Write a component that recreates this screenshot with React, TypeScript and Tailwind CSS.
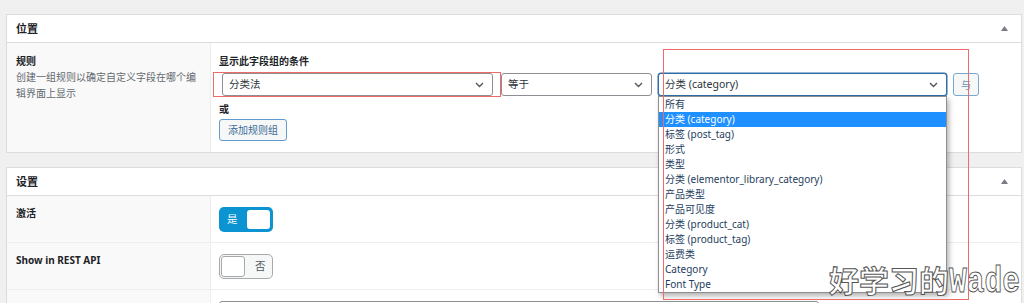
import type { ReactNode } from 'react';

const TAXONOMY_OPTIONS = [
  '所有',
  '分类 (category)',
  '标签 (post_tag)',
  '形式',
  '类型',
  '分类 (elementor_library_category)',
  '产品类型',
  '产品可见度',
  '分类 (product_cat)',
  '标签 (product_tag)',
  '运费类',
  'Category',
  'Font Type',
];

function Caret() {
  return (
    <svg width="7" height="5" viewBox="0 0 7 5" className="mr-[4px]">
      <path d="M0 5 L3.5 0 L7 5 Z" fill="#787c82" />
    </svg>
  );
}

function Chevron() {
  return (
    <svg width="9" height="6" viewBox="0 0 9 6" className="shrink-0">
      <path d="M1 1 L4.5 4.5 L8 1" fill="none" stroke="#50575e" strokeWidth="1.4" />
    </svg>
  );
}

function Panel({ title, children }: { title: string; children: ReactNode }) {
  return (
    <section className="border border-[#dcdcde] bg-white">
      <div className="flex h-[28px] items-center justify-between border-b border-[#dcdcde] px-[9px]">
        <h2 className="text-[11px] font-bold leading-none text-[#1d2327]">{title}</h2>
        <Caret />
      </div>
      {children}
    </section>
  );
}

function SelectBox({ label, width, focused }: { label: string; width: string; focused?: boolean }) {
  return (
    <div
      className={`flex h-[23px] items-center justify-between rounded-[3px] border bg-white pl-[6px] pr-[8px] text-[10.5px] text-[#2c3338] ${width} ${
        focused ? 'border-[#2f6ea8] shadow-[0_0_0_0.5px_#2f6ea8]' : 'border-[#8c8f94]'
      }`}
    >
      <span className="leading-none">{label}</span>
      <Chevron />
    </div>
  );
}

function Toggle({ on }: { on: boolean }) {
  if (on) {
    return (
      <div className="flex h-[25px] w-[54px] items-center justify-between rounded-[5px] bg-[#0c93d2] pl-[8px] pr-[3px]">
        <span className="text-[10.5px] leading-none text-white">是</span>
        <span className="h-[19px] w-[23px] rounded-[3px] bg-white" />
      </div>
    );
  }
  return (
    <div className="flex h-[25px] w-[54px] items-center rounded-[5px] border border-[#a7aaad] bg-[#f6f7f7] pl-[1px]">
      <span className="h-[21px] w-[24px] rounded-[3px] border border-[#a7aaad] bg-white" />
      <span className="ml-[10px] text-[10.5px] leading-none text-[#50575e]">否</span>
    </div>
  );
}

function SettingRow({ label, children }: { label: string; children: ReactNode }) {
  return (
    <div className="flex border-b border-[#eeeeee]">
      <div className="w-[204px] shrink-0 border-r border-[#eeeeee] bg-[#f9f9f9] pl-[9px] pt-[10px] text-[10px] font-bold leading-[14px] text-[#1d2327]">
        {label}
      </div>
      <div className="flex-1 pb-[10px] pl-[8px] pt-[11px]">{children}</div>
    </div>
  );
}

export default function App() {
  return (
    <div className="relative h-[303px] overflow-hidden bg-[#f0f0f1] pl-[6px] pr-[2px] pt-[14px] font-['Noto_Sans','Noto_Sans_CJK_SC',sans-serif]">
      {/* 位置 */}
      <Panel title="位置">
        <div className="flex h-[109px]">
          <div className="w-[204px] shrink-0 border-r border-[#eeeeee] bg-[#f9f9f9] pl-[9px] pt-[11px]">
            <div className="text-[10px] font-bold leading-[14px] text-[#1d2327]">规则</div>
            <p className="mt-[1px] text-[10px] leading-[16px] text-[#646970]">
              创建一组规则以确定自定义字段在哪个编
              <br />
              辑界面上显示
            </p>
          </div>
          <div className="flex-1 pl-[8px] pt-[11px]">
            <div className="text-[10px] font-bold leading-[14px] text-[#1d2327]">显示此字段组的条件</div>
            <div className="mt-[5px] flex items-start">
              <div className="ml-[3px]">
                <SelectBox label="分类法" width="w-[271px]" />
              </div>
              <div className="ml-[8px]">
                <SelectBox label="等于" width="w-[151px]" />
              </div>
              <div className="relative z-10 ml-[6px]">
                <SelectBox label="分类 (category)" width="w-[289px]" focused />
                {/* 展开的下拉列表 */}
                <ul className="absolute left-0 top-[23px] w-[289px] border border-[#8f8f8f] bg-white py-0 shadow-[2px_3px_5px_rgba(0,0,0,0.3)]">
                  {TAXONOMY_OPTIONS.map((opt, idx) => (
                    <li
                      key={opt}
                      className={`h-[15px] pl-[6px] text-[10px] leading-[15px] ${
                        idx === 1 ? 'bg-[#1e90ff] text-white' : 'text-[#1e3d5e]'
                      }`}
                    >
                      {opt}
                    </li>
                  ))}
                </ul>
              </div>
              <button
                type="button"
                className="ml-[6px] h-[23px] w-[26px] rounded-[3px] border border-[#7aa7cf] bg-[#f6f7f7] text-[10px] leading-none text-[#6b8fb3]"
              >
                与
              </button>
            </div>
            <div className="mt-[6px] text-[10px] font-bold leading-[14px] text-[#1d2327]">或</div>
            <button
              type="button"
              className="mt-[2px] h-[22px] rounded-[3px] border border-[#5f9bd0] bg-[#f6f7f7] px-[8px] text-[10px] leading-none text-[#3a6c9a]"
            >
              添加规则组
            </button>
          </div>
        </div>
      </Panel>

      {/* 设置 */}
      <div className="mt-[14px]">
        <Panel title="设置">
          <SettingRow label="激活">
            <Toggle on />
          </SettingRow>
          <SettingRow label="Show in REST API">
            <Toggle on={false} />
          </SettingRow>
          <SettingRow label="">
            <div className="h-[30px] w-[600px] rounded-[3px] border border-[#8c8f94]" />
          </SettingRow>
        </Panel>
      </div>

      {/* 标注框 */}
      <div className="pointer-events-none absolute left-[213px] top-[72px] h-[25px] w-[288px] border border-[#f06a6a]" />
      <div className="pointer-events-none absolute left-[663px] top-[49px] z-20 h-[251px] w-[306px] border border-[#f06a6a]" />

      {/* 水印 */}
      <div className="pointer-events-none absolute left-[829px] top-[265px] z-30 flex h-[34px] items-baseline text-white [-webkit-text-stroke:1px_#555555]">
        <span className="text-[30px] font-bold leading-[32px]">好学习的</span>
        <span className="inline-block w-[72px] origin-left scale-x-[0.8] font-['Liberation_Mono',monospace] text-[37px] font-bold leading-[32px]">
          Wade
        </span>
      </div>
    </div>
  );
}
